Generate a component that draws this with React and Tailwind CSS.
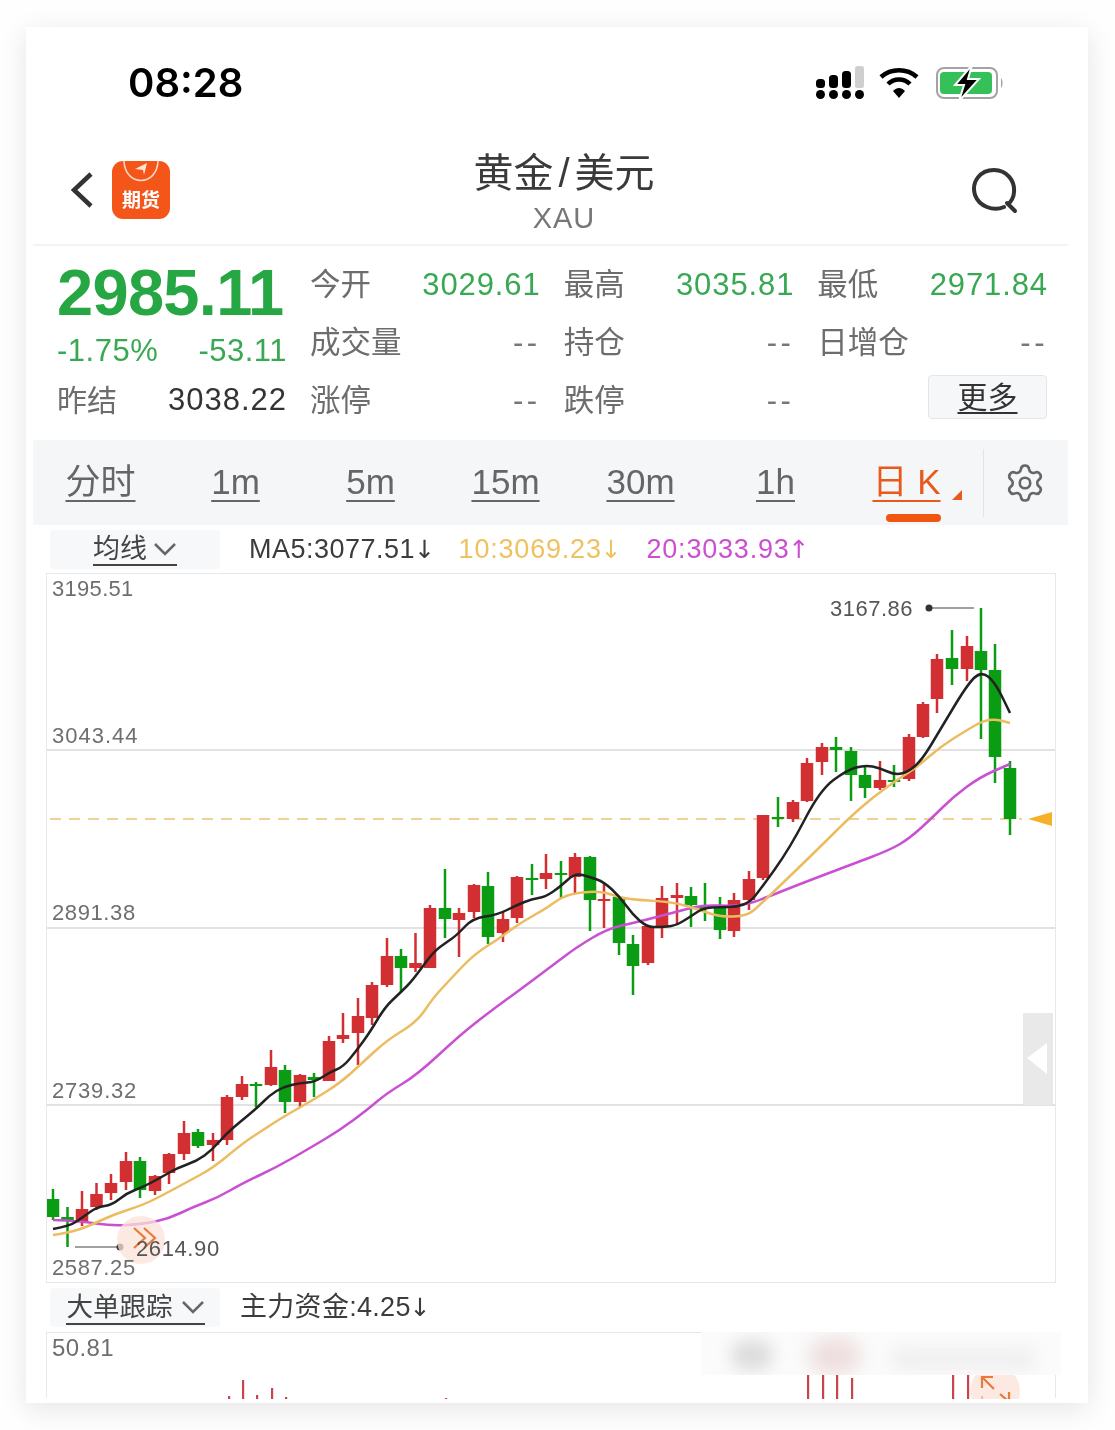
import { Settings } from 'lucide-react'

// x, wick top, wick bottom, body top, body bottom, up (red) or down (green)
const CANDLES = [
  [53, 1189, 1220, 1199, 1217, 0], [67.5, 1207, 1247, 1217, 1220, 0], [82, 1191, 1226, 1209, 1221, 1],
  [96.5, 1183, 1210, 1194, 1207, 1], [111, 1174, 1200, 1183, 1193, 1], [126, 1152, 1190, 1161, 1182, 1],
  [140, 1157, 1198, 1161, 1190, 0], [155, 1175, 1195, 1176, 1191, 1], [169, 1153, 1184, 1154, 1173, 1],
  [184, 1121, 1160, 1133, 1154, 1], [198, 1129, 1148, 1132, 1146, 0], [213, 1133, 1161, 1140, 1145, 1],
  [227, 1095, 1145, 1097, 1140, 1], [242, 1076, 1100, 1084, 1097, 1], [256, 1082, 1107, 1084, 1086, 0],
  [271, 1050, 1086, 1067, 1085, 1], [285, 1065, 1113, 1070, 1102, 0], [300, 1074, 1108, 1075, 1102, 1],
  [314, 1073, 1097, 1077, 1080, 0], [329, 1036, 1081, 1041, 1081, 1], [343, 1013, 1043, 1035, 1039, 1],
  [358, 998, 1065, 1016, 1033, 1], [372, 982, 1025, 985, 1018, 1], [387, 938, 987, 956, 985, 1],
  [401, 949, 992, 956, 968, 0], [415.5, 933, 972, 963, 968, 1], [430, 905, 968, 908, 968, 1],
  [445, 869, 938, 908, 919, 0], [459, 908, 957, 913, 920, 1], [474, 884, 918, 885, 912, 1],
  [488, 872, 944, 886, 937, 0], [503, 911, 942, 919, 933, 1], [517, 876, 923, 877, 918, 1],
  [532, 864, 895, 878, 880, 0], [546, 854, 889, 873, 879, 1], [561, 861, 898, 873, 875, 0],
  [575, 853, 893, 857, 877, 1], [590, 856, 931, 857, 900, 0], [604, 883, 928, 899, 901, 1],
  [619, 897, 955, 897, 943, 0], [633, 935, 995, 944, 966, 0], [648, 926, 965, 926, 963, 1],
  [662, 886, 938, 898, 926, 1], [677, 883, 925, 895, 898, 1], [691, 887, 927, 896, 905, 0],
  [705, 883, 921, 907, 909, 0], [720, 897, 939, 907, 930, 0], [734, 893, 937, 900, 931, 1],
  [749, 871, 910, 879, 900, 1], [763, 815, 880, 815, 878, 1], [778, 797, 827, 817, 819, 0],
  [793, 800, 822, 802, 819, 1], [807, 758, 802, 763, 801, 1], [822, 743, 775, 747, 762, 1],
  [836, 737, 772, 747, 750, 0], [851, 747, 801, 751, 775, 0], [865, 766, 798, 775, 788, 0],
  [880, 761, 790, 780, 788, 1], [894, 765, 787, 780, 782, 0], [909, 734, 781, 737, 779, 1],
  [923, 702, 738, 704, 737, 1], [937, 654, 713, 659, 699, 1], [952, 630, 685, 658, 669, 0],
  [967, 636, 681, 646, 669, 1], [981, 608, 739, 651, 670, 0], [995, 644, 783, 670, 757, 0],
  [1010, 761, 835, 768, 819, 0],
]

const MA5 = '53,1229 70,1226 83,1217 97,1207 112,1205 127,1193 143,1187 160,1178 177,1168 197,1161 212,1150 227,1133 240,1122 257,1108 270,1095 283,1087 300,1083 315,1082 330,1072 343,1067 357,1050 370,1032 385,1007 400,993 413,980 433,952 447,942 457,935 473,918 497,915 517,905 532,899 545,897 560,887 575,873 590,877 604,882 620,897 633,915 647,927 660,927 675,926 690,917 703,908 720,907 737,907 750,902 760,890 790,848 820,790 847,770 865,765 880,768 895,775 908,772 922,760 940,730 967,685 981,671 995,682 1010,713'
const MA10 = '53,1235 67,1233 87,1227 112,1215 143,1205 163,1195 187,1182 213,1168 243,1143 263,1130 283,1117 313,1100 340,1083 360,1065 387,1040 417,1022 433,998 447,983 473,955 500,938 520,923 547,908 560,898 575,893 602,891 620,898 640,900 657,901 677,903 700,910 720,917 747,916 760,905 817,850 847,820 873,797 900,778 917,767 940,747 967,730 983,721 995,719 1010,723'
const MA20 = '53,1220 80,1221 112,1226 143,1224 168,1219 193,1207 217,1198 243,1183 277,1167 310,1148 340,1130 367,1110 387,1093 417,1075 460,1035 492,1010 517,992 557,962 577,947 607,929 633,923 657,917 683,910 703,905 733,906 747,904 760,900 800,884 850,865 890,850 910,838 933,817 953,797 980,777 1010,764'

const RED = '#d12f32'
const GREEN = '#0a9c12'

// rounds the corners of a point list by curving through the midpoints
function smooth(points) {
  const p = points.split(' ').map((s) => s.split(',').map(Number))
  let d = `M${p[0][0]} ${p[0][1]}`
  for (let i = 1; i < p.length - 1; i++) {
    const mx = (p[i][0] + p[i + 1][0]) / 2
    const my = (p[i][1] + p[i + 1][1]) / 2
    d += ` Q${p[i][0]} ${p[i][1]} ${mx} ${my}`
  }
  const last = p[p.length - 1]
  return d + ` L${last[0]} ${last[1]}`
}

function StatusIcons() {
  return (
    <div className="flex items-center mr-[82px]">
      <svg width="48" height="34" viewBox="0 0 48 34">
        <rect x="0" y="13" width="9" height="9" rx="3.5" fill="#000" />
        <rect x="13" y="9" width="9" height="13" rx="3.5" fill="#000" />
        <rect x="26" y="5" width="9" height="17" rx="3.5" fill="#000" />
        <rect x="39" y="0" width="9" height="22" rx="2.5" fill="#cfcfcf" />
        <circle cx="4.5" cy="28.5" r="4.5" fill="#000" />
        <circle cx="17.5" cy="28.5" r="4.5" fill="#000" />
        <circle cx="30.5" cy="28.5" r="4.5" fill="#000" />
        <circle cx="43.5" cy="28.5" r="4.5" fill="#000" />
      </svg>
      <svg className="ml-[15px]" width="40" height="32" viewBox="0 0 40 32" fill="none" stroke="#000" strokeWidth="4.5">
        <path d="M2 10 C12 1 28 1 38 10" />
        <path d="M9 17 C15 11 25 11 31 17" />
        <path d="M14 24 L20 31 L26 24 C22 20 18 20 14 24 Z" fill="#000" stroke="none" />
      </svg>
      <svg className="ml-[17px]" width="70" height="34" viewBox="0 0 70 34">
        <rect x="1" y="2" width="60" height="30" rx="7" fill="#fff" stroke="#a3a3a3" strokeWidth="2" />
        <rect x="4" y="6" width="52" height="22" rx="4" fill="#35c158" />
        <path d="M36 -1 L19 19 L28 19 L23 35 L43 13 L32 13 Z" fill="#000" stroke="#fff" strokeWidth="2" />
        <path d="M65 12 C67 14 67 20 65 22 Z" fill="#a3a3a3" />
      </svg>
    </div>
  )
}

function Quote({ label, value, green }) {
  return (
    <div className="h-[58px] flex items-center justify-between">
      <span className="text-[#6d6d6d] text-[30.5px]">{label}</span>
      <span className={`text-[31px] ${green ? 'tracking-[0.9px] text-[#38a852]' : 'tracking-[3.5px] text-[#777]'}`}>{value}</span>
    </div>
  )
}

function TabItem({ children }) {
  return <div className="text-center text-[35px] text-[#666] underline decoration-2 underline-offset-[6px]">{children}</div>
}

function Arrow({ children }) {
  return <span className="[font-family:'DejaVu_Sans',sans-serif] text-[25px] -ml-[1px]">{children}</span>
}

function MainChart() {
  return (
    <svg width="1008" height="708" viewBox="47 574 1008 708" className="block">
      <line x1="47" x2="1055" y1="750" y2="750" stroke="#e2e2e2" strokeWidth="2" />
      <line x1="47" x2="1055" y1="928" y2="928" stroke="#e2e2e2" strokeWidth="2" />
      <line x1="47" x2="1055" y1="1105" y2="1105" stroke="#e2e2e2" strokeWidth="2" />
      <line x1="50" x2="1022" y1="819" y2="819" stroke="#eec46c" strokeWidth="1.5" strokeDasharray="11 8" />
      <path d="M1052 812 L1052 826 L1028 819 Z" fill="#f6b128" />
      <rect x="1023" y="1013" width="30" height="92" fill="#e9e9e9" />
      <path d="M1047 1043 L1047 1074 L1027 1058 Z" fill="#fff" />

      {CANDLES.map(([x, wt, wb, bt, bb, up]) => (
        <g key={x} fill={up ? RED : GREEN}>
          <rect x={x - 1.25} y={wt} width="2.5" height={wb - wt} />
          <rect x={x - 6.25} y={bt} width="12.5" height={bb - bt} />
        </g>
      ))}

      <path d={smooth(MA20)} fill="none" stroke="#c94fd3" strokeWidth="2.5" />
      <path d={smooth(MA10)} fill="none" stroke="#ecbc60" strokeWidth="2.5" />
      <path d={smooth(MA5)} fill="none" stroke="#222" strokeWidth="2.5" />

      <line x1="929" x2="974" y1="608" y2="608" stroke="#444" strokeWidth="1.2" />
      <circle cx="929" cy="608" r="3.5" fill="#333" />
      <line x1="75" x2="120" y1="1247" y2="1247" stroke="#444" strokeWidth="1.2" />
      <circle cx="120" cy="1247" r="3.5" fill="#333" />

      <circle cx="141" cy="1240" r="24" fill="#fbe3d8" fillOpacity="0.75" />
      <path d="M134 1228 L145 1238 L134 1248 M144 1228 L155 1238 L144 1248" fill="none" stroke="#ea7a3c" strokeWidth="2.2" />

      <g fontSize="22" fill="#6e6e6e" letterSpacing="0.6" fontFamily="'Liberation Sans', sans-serif">
        <text x="52" y="596" letterSpacing="0.3">3195.51</text>
        <text x="52" y="743" letterSpacing="1">3043.44</text>
        <text x="52" y="920">2891.38</text>
        <text x="52" y="1098" letterSpacing="0.8">2739.32</text>
        <text x="52" y="1275">2587.25</text>
        <text x="830" y="616" fill="#555" letterSpacing="0.5">3167.86</text>
        <text x="136" y="1256" fill="#555">2614.90</text>
      </g>
    </svg>
  )
}

const SUB_BARS = [
  [229, 1395], [243, 1379], [257, 1394], [272, 1387], [286, 1396], [446, 1397],
  [808, 1374], [823, 1374], [837, 1374], [852, 1377], [953, 1374], [968, 1374], [982, 1395],
]

function SubChart() {
  return (
    <svg width="1008" height="66" viewBox="47 1332 1008 66" className="block">
      {SUB_BARS.map(([x, top]) => (
        <rect key={x} x={x - 1} y={top} width="2.2" height={1398 - top} fill="#c8444c" />
      ))}
      <circle cx="995" cy="1390" r="25" fill="#fbe3d8" fillOpacity="0.75" />
      <path d="M982 1387 L982 1376 L993 1376 M982 1376 L994 1388 M1000 1393 L1007 1399 M1009 1391 L1009 1399" fill="none" stroke="#ea7a3c" strokeWidth="2.2" />
      <text x="52" y="1355" fontSize="24" fill="#6e6e6e" letterSpacing="0.4" fontFamily="'Liberation Sans', sans-serif">50.81</text>
    </svg>
  )
}

export default function App() {
  return (
    <div className="w-[1115px] h-[1430px] bg-[#fefefe] pt-[27px] pl-[26px] overflow-hidden blur-[0.5px] [font-family:'Liberation_Sans','Noto_Sans_CJK_SC',sans-serif]">
      <div className="w-[1062px] h-[1376px] bg-white shadow-[0_6px_26px_rgba(0,0,0,0.10)] overflow-hidden">
        {/* status bar */}
        <div className="h-[113px] flex items-center justify-between pb-[2px]">
          <span className="ml-[102px] text-[40px] font-semibold text-black [font-family:Inter,sans-serif]">08:28</span>
          <StatusIcons />
        </div>

        {/* nav */}
        <div className="h-[104px] flex items-start">
          <div className="w-[388px] pl-[45px] pt-[21px] flex items-center">
            <svg width="22" height="36" viewBox="0 0 22 36" fill="none" stroke="#333" strokeWidth="4.5">
              <path d="M20 2 L3 18 L20 34" />
            </svg>
            <div className="relative ml-[19px] w-[58px] h-[58px] rounded-[11px] bg-[#f4561a] overflow-hidden flex items-end justify-center pb-[6px]">
              <svg className="absolute top-0 left-[11px]" width="36" height="22" viewBox="0 0 36 22" fill="none">
                <path d="M1 0 C2 26 34 26 35 0" stroke="#fbd9c8" strokeWidth="1.5" />
                <path d="M24 2 L12 8 L20 9 L21 14 Z" fill="#fde3d5" />
              </svg>
              <span className="text-white text-[19px] leading-[24px] font-bold">期货</span>
            </div>
          </div>
          <div className="w-[300px] text-center pt-[9px]">
            <div className="text-[40px] leading-[48px] text-[#3a3a3a] whitespace-nowrap">黄金<span className="mx-[5px]">/</span>美元</div>
            <div className="text-[29px] leading-[42px] text-[#777] tracking-[1px]">XAU</div>
          </div>
          <svg className="ml-[257px] mt-[27px]" width="48" height="48" viewBox="0 0 48 48" fill="none" stroke="#333" strokeWidth="4" strokeLinecap="round">
            <path d="M33 40 C22 45 8 39 4 28 C0 15 9 3 23 3 C36 3 44 14 43 25 C43 30 40 35 37 37" />
            <path d="M36 36 L44 44" />
          </svg>
        </div>
        <div className="ml-[7px] w-[1035px] h-[2px] bg-[#f3f3f3]" />

        {/* quote */}
        <div className="h-[194px] pt-[8px] pl-[31px] flex">
          <div className="w-[253px] pr-[23px] box-border">
            <div className="h-[78px] flex items-center text-[65px] font-bold text-[#27a644] tracking-[-0.7px] whitespace-nowrap">2985.11</div>
            <div className="h-[39px] flex items-center justify-between text-[31px] text-[#38a852] tracking-[0.5px]">
              <span>-1.75%</span>
              <span>-53.11</span>
            </div>
            <div className="h-[58px] flex items-center justify-between">
              <span className="text-[#6d6d6d] text-[30px]">昨结</span>
              <span className="text-[31px] tracking-[1px] text-[#333]">3038.22</span>
            </div>
          </div>
          <div className="w-[738px] pt-[2px] grid grid-cols-3 gap-x-[23px] content-start">
            <Quote label="今开" value="3029.61" green />
            <Quote label="最高" value="3035.81" green />
            <Quote label="最低" value="2971.84" green />
            <Quote label="成交量" value="--" />
            <Quote label="持仓" value="--" />
            <Quote label="日增仓" value="--" />
            <Quote label="涨停" value="--" />
            <Quote label="跌停" value="--" />
            <div className="h-[58px] flex items-center justify-end">
              <div className="w-[119px] h-[44px] -mt-[8px] mr-[1px] flex items-center justify-center bg-[#f6f7f9] border border-[#e4e5e8] rounded-[4px] text-[30px] text-[#333] underline decoration-2 underline-offset-[4px]">更多</div>
            </div>
          </div>
        </div>

        {/* period tabs */}
        <div className="ml-[7px] w-[1035px] h-[85px] bg-[#f5f6f8] flex items-center">
          <div className="w-[945px] grid grid-cols-7 -mt-[1px]">
            <TabItem>分时</TabItem>
            <TabItem>1m</TabItem>
            <TabItem>5m</TabItem>
            <TabItem>15m</TabItem>
            <TabItem>30m</TabItem>
            <TabItem>1h</TabItem>
            <div className="relative text-center text-[35px] text-[#e8591c] -ml-[8px]">
              <span className="underline decoration-2 underline-offset-[6px]">日 K</span>
              <span className="absolute left-[117px] top-[34px] w-0 h-0 border-l-[10px] border-l-transparent border-b-[10px] border-b-[#e8591c]" />
              <span className="absolute left-[51px] top-[58px] w-[55px] h-[8px] rounded-full bg-[#f0560f]" />
            </div>
          </div>
          <div className="w-[1px] h-[68px] bg-[#e3e3e3] ml-[5px]" />
          <Settings className="ml-[22px] -translate-x-[2px] text-[#666]" size={42} strokeWidth={1.5} />
        </div>

        {/* averages row */}
        <div className="h-[48px] pl-[24px] flex items-center text-[27px] whitespace-nowrap">
          <div className="w-[170px] h-[39px] bg-[#f7f8fa] rounded-[4px] flex items-center justify-center">
            <span className="flex items-center border-b-2 border-[#444] text-[#444] leading-[34px] h-[34px] pt-[2px]">
              均线
              <svg className="ml-[6px]" width="24" height="14" viewBox="0 0 24 14" fill="none" stroke="#666" strokeWidth="2.5"><path d="M2 2 L12 12 L22 2" /></svg>
            </span>
          </div>
          <span className="ml-[29px] text-[#3c3c3c] tracking-[0.5px]">MA5:3077.51<Arrow>↓</Arrow></span>
          <span className="ml-[23px] text-[#eec25f] tracking-[0.8px]">10:3069.23<Arrow>↓</Arrow></span>
          <span className="ml-[24px] text-[#cc4fd2] tracking-[0.8px]">20:3033.93<Arrow>↑</Arrow></span>
        </div>

        {/* k-line chart */}
        <div className="ml-[20px] w-[1010px] h-[710px] border border-[#e8e8e8]">
          <MainChart />
        </div>

        {/* big order row */}
        <div className="h-[49px] pl-[24px] flex items-center text-[27px] whitespace-nowrap">
          <div className="w-[170px] h-[39px] bg-[#f7f8fa] rounded-[4px] flex items-center justify-center">
            <span className="flex items-center border-b-2 border-[#444] text-[#444] text-[26.5px] leading-[34px] h-[34px] pl-[1px]">
              大单跟踪
              <svg className="ml-[8px]" width="24" height="14" viewBox="0 0 24 14" fill="none" stroke="#666" strokeWidth="2.5"><path d="M2 2 L12 12 L22 2" /></svg>
            </span>
          </div>
          <span className="ml-[20px] text-[#3c3c3c] tracking-[0.3px]">主力资金:4.25<Arrow>↓</Arrow></span>
        </div>

        {/* lower chart, its right end is smudged over in the picture */}
        <div className="relative ml-[20px] w-[1010px] h-[66px] border-x border-t border-[#e8e8e8]">
          <SubChart />
          <div className="absolute left-[654px] top-[-1px] w-[360px] h-[43px] bg-[#fbfbfb] overflow-hidden">
            <div className="absolute left-[30px] top-[8px] w-[42px] h-[30px] rounded-full bg-[#dcdcdc] blur-[8px]" />
            <div className="absolute left-[108px] top-[6px] w-[52px] h-[36px] rounded-full bg-[#eedede] blur-[9px]" />
            <div className="absolute left-[190px] top-[16px] w-[145px] h-[22px] rounded-full bg-[#efefef] blur-[8px]" />
          </div>
        </div>
      </div>
    </div>
  )
}
